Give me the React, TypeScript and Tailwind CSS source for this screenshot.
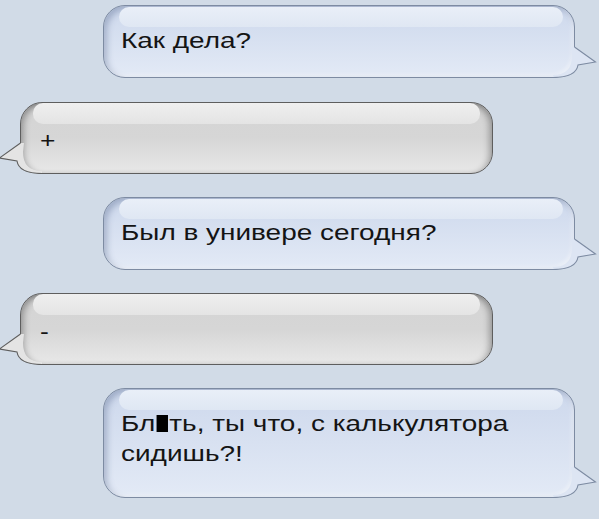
import React from "react";

type Side = "left" | "right";

function Tail({ side, fill, stroke }: { side: Side; fill: string; stroke: string }) {
  return (
    <svg
      width="52"
      height="36"
      viewBox="0 0 52 36"
      className={
        side === "right"
          ? "absolute right-[-22px] bottom-0 z-[5]"
          : "absolute left-[-22px] bottom-0 z-[5] -scale-x-100"
      }
    >
      <path d="M26 5 L30 5 L50.5 20 L33 23 Q31 35.5 8 35.5 L8 33 Q27 33 27 14 Z" fill={fill} />
      <path d="M29.5 5 L50.5 20 L33 23 Q31 35.5 8 35.5" fill="none" stroke={stroke} strokeWidth="1.1" />
    </svg>
  );
}

function BlueBubble({ h, mt, children }: { h: string; mt: string; children: React.ReactNode }) {
  return (
    <div className={`relative ml-[103px] w-[472px] ${h} ${mt}`}>
      <div className="absolute inset-0 rounded-[22px] border border-[#7d8ba2] bg-linear-to-b from-[#cdd8ec] to-[#e3eaf6] shadow-[inset_3px_3px_6px_rgba(70,90,130,0.35),inset_-2px_-2px_4px_rgba(255,255,255,0.5)]" />
      <div className="absolute left-[16px] right-[12px] top-[2px] h-[20px] rounded-[10px] bg-linear-to-b from-[#e9eff8] to-[#dfe7f3]" />
      <Tail side="right" fill="#dde5f3" stroke="#7d8ba2" />
      <div className="relative z-10 pl-[18px] pt-[21px] font-['Liberation_Sans',Arial,sans-serif] text-[22px] leading-[30px] text-[#141414]">
        <div className="origin-left scale-x-[1.27]">{children}</div>
      </div>
    </div>
  );
}

function GrayBubble({ mt, children }: { mt: string; children: React.ReactNode }) {
  return (
    <div className={`relative ml-[20px] w-[473px] h-[72px] ${mt}`}>
      <div className="absolute inset-0 rounded-[22px] border-[1.5px] border-[#5e5e5e] bg-linear-to-b from-[#d4d4d4] via-[#d6d6d6] to-[#e8e8e8] shadow-[inset_4px_2px_6px_-1px_rgba(0,0,0,0.28),inset_-4px_2px_6px_-1px_rgba(0,0,0,0.28)]" />
      <div className="absolute left-[13px] right-[13px] top-[1px] h-[21px] rounded-[10px] bg-linear-to-b from-[#efefef] to-[#e4e4e4]" />
      <Tail side="left" fill="#e4e4e4" stroke="#5e5e5e" />
      <div className="relative z-10 pl-[20px] pt-[24px] font-['Liberation_Sans',Arial,sans-serif] text-[22px] leading-[30px] text-[#141414]">
        <div className="origin-left scale-x-[1.2]">{children}</div>
      </div>
    </div>
  );
}

export default function App() {
  return (
    <div className="w-[599px] h-[519px] overflow-hidden bg-[#d1dbe7] flex flex-col">
      <BlueBubble h="h-[73px]" mt="mt-[5px]">Как дела?</BlueBubble>
      <GrayBubble mt="mt-[24px]">+</GrayBubble>
      <BlueBubble h="h-[73px]" mt="mt-[23px]">Был в универе сегодня?</BlueBubble>
      <GrayBubble mt="mt-[23px]">-</GrayBubble>
      <BlueBubble h="h-[110px]" mt="mt-[23px]">
        Бл<span className="inline-block mx-[1px] w-[9px] h-[17px] bg-black align-[-1px]" />ть, ты что, с калькулятора
        <br />
        сидишь?!
      </BlueBubble>
    </div>
  );
}
